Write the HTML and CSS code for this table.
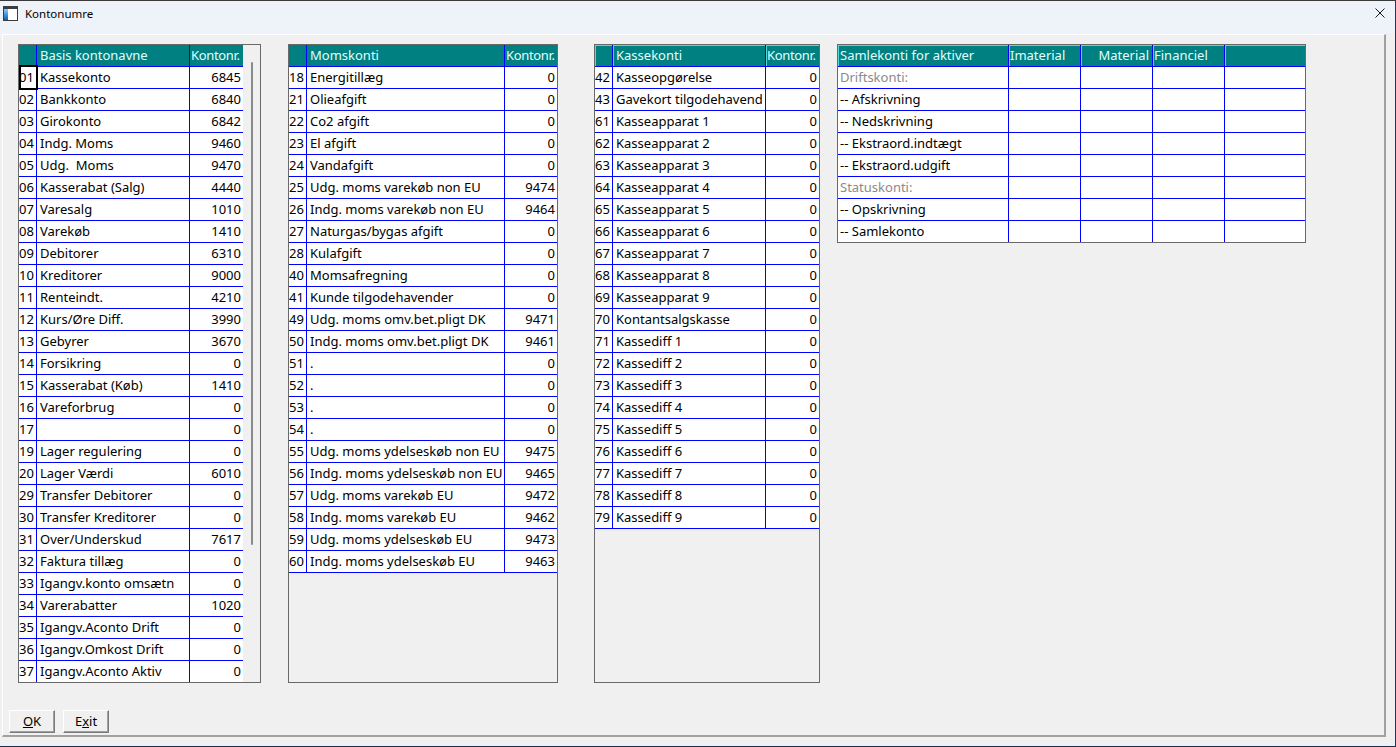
FILE: index.html
```html
<!DOCTYPE html>
<html lang="da">
<head>
<meta charset="utf-8">
<title>Kontonumre</title>
<link rel="stylesheet" href="styles.css">
</head>
<body>
<div class="window">
  <div class="titlebar">
    <svg class="appicon" width="15" height="15" viewBox="0 0 15 15">
      <defs>
        <linearGradient id="ig" x1="0" y1="0" x2="0" y2="1">
          <stop offset="0" stop-color="#7fd0ff"/>
          <stop offset="1" stop-color="#0a5fb4"/>
        </linearGradient>
      </defs>
      <rect x="0.5" y="0.5" width="14" height="14" fill="#fff" stroke="#3c3c3c"/>
      <rect x="0" y="0" width="15" height="3" fill="#3c3c3c"/>
      <rect x="1" y="3" width="4" height="11" fill="url(#ig)"/>
    </svg>
    <span class="title">Kontonumre</span>
    <svg class="close" width="10" height="10" viewBox="0 0 10 10">
      <path d="M0.5 0.5 L9.5 9.5 M9.5 0.5 L0.5 9.5" stroke="#1a1a1a" stroke-width="1" fill="none"/>
    </svg>
  </div>
  <div class="client">
    <div class="grids">
      <div class="grid g1">
        <div class="body">
          <div class="row hd"><div class="c n"></div><div class="c">Basis kontonavne</div><div class="c kh">Kontonr.</div></div>
          <div class="row"><div class="c n focus">01</div><div class="c">Kassekonto</div><div class="c k">6845</div></div>
          <div class="row"><div class="c n">02</div><div class="c">Bankkonto</div><div class="c k">6840</div></div>
          <div class="row"><div class="c n">03</div><div class="c">Girokonto</div><div class="c k">6842</div></div>
          <div class="row"><div class="c n">04</div><div class="c">Indg. Moms</div><div class="c k">9460</div></div>
          <div class="row"><div class="c n">05</div><div class="c">Udg.&nbsp; Moms</div><div class="c k">9470</div></div>
          <div class="row"><div class="c n">06</div><div class="c">Kasserabat (Salg)</div><div class="c k">4440</div></div>
          <div class="row"><div class="c n">07</div><div class="c">Varesalg</div><div class="c k">1010</div></div>
          <div class="row"><div class="c n">08</div><div class="c">Varekøb</div><div class="c k">1410</div></div>
          <div class="row"><div class="c n">09</div><div class="c">Debitorer</div><div class="c k">6310</div></div>
          <div class="row"><div class="c n">10</div><div class="c">Kreditorer</div><div class="c k">9000</div></div>
          <div class="row"><div class="c n">11</div><div class="c">Renteindt.</div><div class="c k">4210</div></div>
          <div class="row"><div class="c n">12</div><div class="c">Kurs/Øre Diff.</div><div class="c k">3990</div></div>
          <div class="row"><div class="c n">13</div><div class="c">Gebyrer</div><div class="c k">3670</div></div>
          <div class="row"><div class="c n">14</div><div class="c">Forsikring</div><div class="c k">0</div></div>
          <div class="row"><div class="c n">15</div><div class="c">Kasserabat (Køb)</div><div class="c k">1410</div></div>
          <div class="row"><div class="c n">16</div><div class="c">Vareforbrug</div><div class="c k">0</div></div>
          <div class="row"><div class="c n">17</div><div class="c"></div><div class="c k">0</div></div>
          <div class="row"><div class="c n">19</div><div class="c">Lager regulering</div><div class="c k">0</div></div>
          <div class="row"><div class="c n">20</div><div class="c">Lager Værdi</div><div class="c k">6010</div></div>
          <div class="row"><div class="c n">29</div><div class="c">Transfer Debitorer</div><div class="c k">0</div></div>
          <div class="row"><div class="c n">30</div><div class="c">Transfer Kreditorer</div><div class="c k">0</div></div>
          <div class="row"><div class="c n">31</div><div class="c">Over/Underskud</div><div class="c k">7617</div></div>
          <div class="row"><div class="c n">32</div><div class="c">Faktura tillæg</div><div class="c k">0</div></div>
          <div class="row"><div class="c n">33</div><div class="c">Igangv.konto omsætn</div><div class="c k">0</div></div>
          <div class="row"><div class="c n">34</div><div class="c">Varerabatter</div><div class="c k">1020</div></div>
          <div class="row"><div class="c n">35</div><div class="c">Igangv.Aconto Drift</div><div class="c k">0</div></div>
          <div class="row"><div class="c n">36</div><div class="c">Igangv.Omkost Drift</div><div class="c k">0</div></div>
          <div class="row"><div class="c n">37</div><div class="c">Igangv.Aconto Aktiv</div><div class="c k">0</div></div>
        </div>
        <div class="vs"><div class="thumb"></div></div>
      </div>

      <div class="grid g2">
        <div class="row hd"><div class="c n"></div><div class="c">Momskonti</div><div class="c kh">Kontonr.</div></div>
        <div class="row"><div class="c n">18</div><div class="c">Energitillæg</div><div class="c k">0</div></div>
        <div class="row"><div class="c n">21</div><div class="c">Olieafgift</div><div class="c k">0</div></div>
        <div class="row"><div class="c n">22</div><div class="c">Co2 afgift</div><div class="c k">0</div></div>
        <div class="row"><div class="c n">23</div><div class="c">El afgift</div><div class="c k">0</div></div>
        <div class="row"><div class="c n">24</div><div class="c">Vandafgift</div><div class="c k">0</div></div>
        <div class="row"><div class="c n">25</div><div class="c">Udg. moms varekøb non EU</div><div class="c k">9474</div></div>
        <div class="row"><div class="c n">26</div><div class="c">Indg. moms varekøb non EU</div><div class="c k">9464</div></div>
        <div class="row"><div class="c n">27</div><div class="c">Naturgas/bygas afgift</div><div class="c k">0</div></div>
        <div class="row"><div class="c n">28</div><div class="c">Kulafgift</div><div class="c k">0</div></div>
        <div class="row"><div class="c n">40</div><div class="c">Momsafregning</div><div class="c k">0</div></div>
        <div class="row"><div class="c n">41</div><div class="c">Kunde tilgodehavender</div><div class="c k">0</div></div>
        <div class="row"><div class="c n">49</div><div class="c">Udg. moms omv.bet.pligt DK</div><div class="c k">9471</div></div>
        <div class="row"><div class="c n">50</div><div class="c">Indg. moms omv.bet.pligt DK</div><div class="c k">9461</div></div>
        <div class="row"><div class="c n">51</div><div class="c">.</div><div class="c k">0</div></div>
        <div class="row"><div class="c n">52</div><div class="c">.</div><div class="c k">0</div></div>
        <div class="row"><div class="c n">53</div><div class="c">.</div><div class="c k">0</div></div>
        <div class="row"><div class="c n">54</div><div class="c">.</div><div class="c k">0</div></div>
        <div class="row"><div class="c n">55</div><div class="c">Udg. moms ydelseskøb non EU</div><div class="c k">9475</div></div>
        <div class="row"><div class="c n">56</div><div class="c">Indg. moms ydelseskøb non EU</div><div class="c k">9465</div></div>
        <div class="row"><div class="c n">57</div><div class="c">Udg. moms varekøb EU</div><div class="c k">9472</div></div>
        <div class="row"><div class="c n">58</div><div class="c">Indg. moms varekøb EU</div><div class="c k">9462</div></div>
        <div class="row"><div class="c n">59</div><div class="c">Udg. moms ydelseskøb EU</div><div class="c k">9473</div></div>
        <div class="row"><div class="c n">60</div><div class="c">Indg. moms ydelseskøb EU</div><div class="c k">9463</div></div>
      </div>

      <div class="grid g3">
        <div class="row hd hl"><div class="c n"></div><div class="c">Kassekonti</div><div class="c kh">Kontonr.</div></div>
        <div class="row"><div class="c n">42</div><div class="c">Kasseopgørelse</div><div class="c k">0</div></div>
        <div class="row"><div class="c n">43</div><div class="c">Gavekort tilgodehavend</div><div class="c k">0</div></div>
        <div class="row"><div class="c n">61</div><div class="c">Kasseapparat 1</div><div class="c k">0</div></div>
        <div class="row"><div class="c n">62</div><div class="c">Kasseapparat 2</div><div class="c k">0</div></div>
        <div class="row"><div class="c n">63</div><div class="c">Kasseapparat 3</div><div class="c k">0</div></div>
        <div class="row"><div class="c n">64</div><div class="c">Kasseapparat 4</div><div class="c k">0</div></div>
        <div class="row"><div class="c n">65</div><div class="c">Kasseapparat 5</div><div class="c k">0</div></div>
        <div class="row"><div class="c n">66</div><div class="c">Kasseapparat 6</div><div class="c k">0</div></div>
        <div class="row"><div class="c n">67</div><div class="c">Kasseapparat 7</div><div class="c k">0</div></div>
        <div class="row"><div class="c n">68</div><div class="c">Kasseapparat 8</div><div class="c k">0</div></div>
        <div class="row"><div class="c n">69</div><div class="c">Kasseapparat 9</div><div class="c k">0</div></div>
        <div class="row"><div class="c n">70</div><div class="c">Kontantsalgskasse</div><div class="c k">0</div></div>
        <div class="row"><div class="c n">71</div><div class="c">Kassediff 1</div><div class="c k">0</div></div>
        <div class="row"><div class="c n">72</div><div class="c">Kassediff 2</div><div class="c k">0</div></div>
        <div class="row"><div class="c n">73</div><div class="c">Kassediff 3</div><div class="c k">0</div></div>
        <div class="row"><div class="c n">74</div><div class="c">Kassediff 4</div><div class="c k">0</div></div>
        <div class="row"><div class="c n">75</div><div class="c">Kassediff 5</div><div class="c k">0</div></div>
        <div class="row"><div class="c n">76</div><div class="c">Kassediff 6</div><div class="c k">0</div></div>
        <div class="row"><div class="c n">77</div><div class="c">Kassediff 7</div><div class="c k">0</div></div>
        <div class="row"><div class="c n">78</div><div class="c">Kassediff 8</div><div class="c k">0</div></div>
        <div class="row"><div class="c n">79</div><div class="c">Kassediff 9</div><div class="c k">0</div></div>
      </div>

      <div class="grid g4">
        <div class="row hd hl"><div class="c s">Samlekonti for aktiver</div><div class="c h1">Imaterial</div><div class="c hr">Material</div><div class="c h1">Financiel</div><div class="c"></div></div>
        <div class="row"><div class="c s muted">Driftskonti:</div><div class="c"></div><div class="c"></div><div class="c"></div><div class="c"></div></div>
        <div class="row"><div class="c s">-- Afskrivning</div><div class="c"></div><div class="c"></div><div class="c"></div><div class="c"></div></div>
        <div class="row"><div class="c s">-- Nedskrivning</div><div class="c"></div><div class="c"></div><div class="c"></div><div class="c"></div></div>
        <div class="row"><div class="c s">-- Ekstraord.indtægt</div><div class="c"></div><div class="c"></div><div class="c"></div><div class="c"></div></div>
        <div class="row"><div class="c s">-- Ekstraord.udgift</div><div class="c"></div><div class="c"></div><div class="c"></div><div class="c"></div></div>
        <div class="row"><div class="c s muted">Statuskonti:</div><div class="c"></div><div class="c"></div><div class="c"></div><div class="c"></div></div>
        <div class="row"><div class="c s">-- Opskrivning</div><div class="c"></div><div class="c"></div><div class="c"></div><div class="c"></div></div>
        <div class="row"><div class="c s">-- Samlekonto</div><div class="c"></div><div class="c"></div><div class="c"></div><div class="c"></div></div>
      </div>
    </div>
    <div class="buttons">
      <button class="btn"><u>O</u>K</button>
      <button class="btn">E<u>x</u>it</button>
    </div>
  </div>
</div>
</body>
</html>
```

FILE: styles.css
```css
html, body {
  margin: 0;
  padding: 0;
}
body {
  width: 1396px;
  height: 747px;
  overflow: hidden;
  background: #f0f0f0;
  font-family: "Noto Sans", "Liberation Sans", sans-serif;
  font-size: 13px;
  color: #000;
}
.window {
  width: 1396px;
  height: 747px;
  box-sizing: border-box;
  display: flex;
  flex-direction: column;
  background: #f0f0f0;
  border-top: 1px solid #3a3a3a;
  border-right: 1px solid #24365a;
  border-bottom: 1px solid #1c2c4c;
}
.titlebar {
  height: 33px;
  flex: none;
  display: flex;
  align-items: flex-start;
  background: #eef2f9;
}
.appicon {
  margin: 5px 0 0 3px;
  flex: none;
}
.title {
  margin: 5px 0 0 7px;
  font-size: 11.5px;
  line-height: 16px;
  color: #000;
}
.close {
  margin: 7px 10px 0 auto;
  flex: none;
}
.client {
  flex: 1;
  margin: 0 9px 9px 2px;
  border-top: 1px solid #fff;
  border-left: 1px solid #fff;
  border-right: 2px solid #a0a0a0;
  border-bottom: 2px solid #a0a0a0;
  display: flex;
  flex-direction: column;
}
.grids {
  display: flex;
  align-items: flex-start;
  padding: 9px 0 0 15px;
}
.grid {
  box-sizing: border-box;
  border: 1px solid #696969;
  background: #f0f0f0;
  flex: none;
}
.g1 {
  width: 243px;
  height: 639px;
  display: flex;
}
.g1 .body {
  width: 224px;
  height: 637px;
  overflow: hidden;
}
.vs {
  width: 17px;
  box-sizing: border-box;
  padding: 17px 0 0 8px;
}
.thumb {
  width: 2px;
  height: 483px;
  background: #8a8a8a;
  border-radius: 1px;
}
.g2 {
  width: 270px;
  height: 639px;
  margin-left: 27px;
}
.g3 {
  width: 226px;
  height: 639px;
  margin-left: 36px;
}
.g4 {
  width: 469px;
  margin-left: 17px;
}
.row {
  display: grid;
  height: 21px;
  border-bottom: 1px solid #0000ff;
  background: #fff;
}
.g1 .row { grid-template-columns: 18px 153px 53px; }
.g2 .row { grid-template-columns: 18px 198px 52px; }
.g3 .row { grid-template-columns: 18px 153px 53px; }
.g4 .row { grid-template-columns: 171px 72px 72px 72px 80px; }
.g4 .row:last-child { border-bottom: none; }
.c {
  box-sizing: border-box;
  border-right: 1px solid #0000ff;
  padding: 0 3px;
  line-height: 21px;
  white-space: nowrap;
  overflow: hidden;
}
.c:last-child { border-right: none; }
.c.n { padding: 0; }
.c.k { text-align: right; padding: 0 2px 0 0; }
.c.kh { padding: 0 0 0 1px; letter-spacing: -0.35px; }
.c.s { padding: 0 2px; }
.c.h1 { padding: 0 1px; }
.c.hr { text-align: right; padding: 0 3px 0 0; }
.muted { color: #8a8a8a; }
.hd {
  background: #008080;
  color: #e0ffff;
}
.hl .c {
  box-shadow: inset 1px 1px 0 #55d8d8;
}
.focus {
  position: relative;
  overflow: visible;
}
.focus::after {
  content: "";
  position: absolute;
  left: 0;
  top: -2px;
  width: 19px;
  height: 25px;
  box-sizing: border-box;
  border: 2px solid #000;
}
.buttons {
  display: flex;
  gap: 8px;
  padding-left: 6px;
  margin-top: 27px;
}
.btn {
  width: 46px;
  height: 23px;
  box-sizing: border-box;
  padding: 0;
  margin: 0;
  font-family: "Noto Sans", "Liberation Sans", sans-serif;
  font-size: 13px;
  line-height: 19px;
  color: #000;
  background: #f0f0f0;
  border-style: solid;
  border-width: 1px;
  border-color: #fff #7a7a7a #7a7a7a #fff;
  box-shadow: inset -1px -1px 0 #a0a0a0;
}
```
